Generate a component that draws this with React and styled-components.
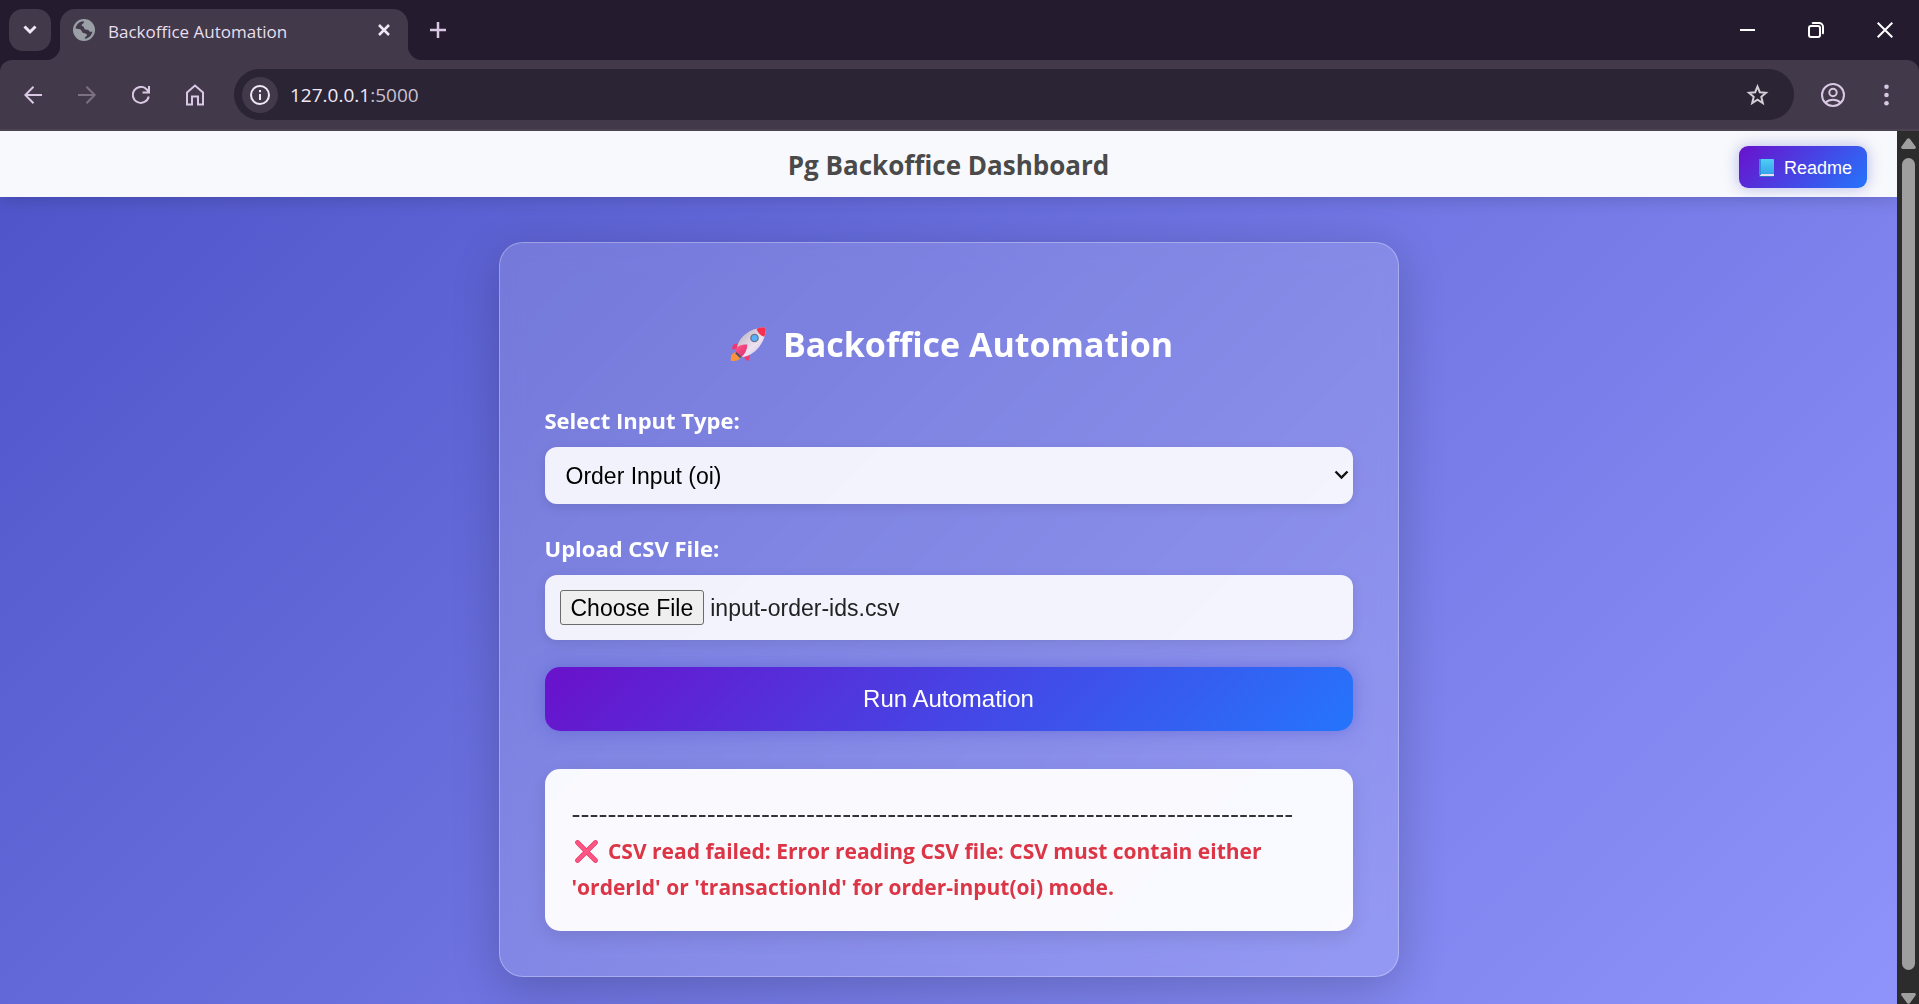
import React, { useEffect, useRef } from "react";
import styled, { createGlobalStyle } from "styled-components";

const ui = `"Segoe UI", "Open Sans", sans-serif`;
const arial = `"Liberation Sans", Arial, sans-serif`;

const GlobalStyle = createGlobalStyle`
  *, *::before, *::after { box-sizing: border-box; }
  body { margin: 0; font-family: ${ui}; background: #241c2e; }
  button { border: 0; padding: 0; cursor: pointer; font-family: ${arial}; }
  svg { display: block; flex: none; }
`;

const Shell = styled.div`
  display: flex;
  flex-direction: column;
  height: 100vh;
`;

/* ---------- browser frame ---------- */

const TabStrip = styled.div`
  display: flex;
  align-items: flex-start;
  height: 60px;
  flex: none;
  padding: 9px 0 0 9px;
  background: #241c2e;
`;

const TabSearch = styled.button`
  display: grid;
  place-items: center;
  width: 42px;
  height: 42px;
  border-radius: 14px;
  background: #42394b;
`;

const Tab = styled.div`
  position: relative;
  display: flex;
  align-items: center;
  width: 348px;
  height: 51px;
  margin-left: 9px;
  padding: 0 13px 9px;
  border-radius: 15px 15px 0 0;
  background: #42394b;

  &::before,
  &::after {
    content: "";
    position: absolute;
    bottom: 0;
    width: 15px;
    height: 15px;
  }
  &::before {
    right: 100%;
    background: radial-gradient(circle at 0 0, transparent 15px, #42394b 16px);
  }
  &::after {
    left: 100%;
    background: radial-gradient(circle at 100% 0, transparent 15px, #42394b 16px);
  }
`;

const TabTitle = styled.span`
  flex: 1;
  margin-left: 13px;
  padding-top: 3px;
  font-size: 17px;
  line-height: 24px;
  color: #e8dfee;
`;

const PlainButton = styled.button`
  display: grid;
  place-items: center;
  width: ${(p) => p.$w}px;
  height: ${(p) => p.$h}px;
  background: transparent;
`;

const NewTab = styled(PlainButton)`
  margin-left: 9px;
`;

const WindowControls = styled.div`
  display: flex;
  margin-left: auto;
`;

const Toolbar = styled.div`
  display: flex;
  align-items: center;
  height: 71px;
  flex: none;
  padding: 0 5px 0 6px;
  border-radius: 12px 12px 0 0;
  border-bottom: 2px solid #4b4352;
  background: #42394b;
`;

const AddressBar = styled.div`
  display: flex;
  align-items: center;
  flex: 1;
  height: 51px;
  margin: 0 12px;
  padding: 0 9px 0 8px;
  border-radius: 26px;
  background: #2b2435;
`;

const SiteInfo = styled.button`
  display: grid;
  place-items: center;
  width: 36px;
  height: 36px;
  border-radius: 50%;
  background: #42394b;
`;

const Url = styled.a`
  flex: 1;
  margin-left: 12px;
  font-size: 19px;
  line-height: 28px;
  color: #f1eaf5;
  text-decoration: none;

  span { color: #c9c0cf; }
`;

const Viewport = styled.div`
  display: grid;
  grid-template-columns: minmax(0, 1fr) 22px;
  flex: 1;
  min-height: 0;
`;

const ScrollRail = styled.div`
  display: flex;
  flex-direction: column;
  align-items: center;
  gap: 9px;
  padding: 7px 0 0;
  background: #2c2c2c;
  overflow: hidden;
`;

const ScrollThumb = styled.div`
  flex: 1;
  width: 13px;
  border-radius: 7px;
  background: #9f9f9f;
`;

const RailEnd = styled.div`
  padding-top: 14px;
`;

/* ---------- page ---------- */

const Page = styled.div`
  overflow-y: auto;
  scrollbar-width: none;
`;

const PageBody = styled.div`
  min-height: 100%;
  background: linear-gradient(135deg, #4e54c8, #8f94fb);
`;

const Header = styled.header`
  display: grid;
  grid-template-columns: 1fr auto 1fr;
  align-items: start;
  padding: 15px 30px 9px;
  background: #f8f9fc;
  box-shadow: 0 3px 15px rgba(0, 0, 0, 0.15);
`;

const HeaderTitle = styled.h1`
  grid-column: 2;
  margin: 0;
  font-size: 26px;
  font-weight: 700;
  line-height: 38px;
  color: #4a4a4a;
`;

const ReadmeButton = styled.button`
  display: flex;
  align-items: center;
  justify-self: end;
  gap: 10px;
  height: 42px;
  padding: 1px 15px 0 20px;
  border-radius: 9px;
  background: linear-gradient(135deg, #6a11cb, #2575fc);
  box-shadow: 0 0 15px rgba(78, 84, 200, 0.4);
  color: #fff;
  font-size: 18px;
  line-height: 24px;
`;

const Main = styled.main`
  display: flex;
  justify-content: center;
  padding: 45px;
`;

const Card = styled.form`
  width: 100%;
  max-width: 900px;
  padding: 77px 45px 45px;
  border: 1px solid rgba(255, 255, 255, 0.3);
  border-radius: 24px;
  background: rgba(255, 255, 255, 0.15);
  backdrop-filter: blur(12px);
  box-shadow: 0 12px 48px rgba(0, 0, 0, 0.2);
`;

const CardTitle = styled.h2`
  display: flex;
  align-items: center;
  justify-content: center;
  gap: 16px;
  margin: 0 0 37px;
  padding-left: 5px;
  font-size: 34px;
  font-weight: 700;
  line-height: 48px;
  color: #fff;
`;

const Label = styled.label`
  display: block;
  margin-bottom: 12px;
  font-size: 22px;
  font-weight: 700;
  line-height: 30px;
  color: #fff;
`;

const field = `
  display: block;
  width: 100%;
  border: 0;
  border-radius: 12px;
  background-color: rgba(255, 255, 255, 0.9);
  box-shadow: 0 3px 12px rgba(0, 0, 0, 0.1);
  font-family: ${arial};
  font-size: 23px;
`;

const SelectWrap = styled.div`
  position: relative;
  margin-bottom: 29px;

  svg {
    position: absolute;
    top: 22px;
    right: 4px;
    pointer-events: none;
  }
`;

const Select = styled.select`
  ${field}
  height: 57px;
  padding: 0 40px 0 21px;
  appearance: none;
  color: #000;
`;

const FileInput = styled.input`
  ${field}
  height: 65px;
  margin-bottom: 27px;
  padding: 15px;
  line-height: 35px;
  color: #222;

  &::file-selector-button {
    height: 35px;
    margin: 0 6px 0 0;
    padding: 0 10px;
    border: 1px solid #6b6b6b;
    border-radius: 3px;
    background: #efefef;
    color: #000;
    font-family: ${arial};
    font-size: 23px;
    line-height: 32px;
  }
`;

const RunButton = styled.button`
  width: 100%;
  height: 64px;
  margin-bottom: 38px;
  border-radius: 15px;
  background: linear-gradient(135deg, #6a11cb, #2575fc);
  box-shadow: 0 0 18px rgba(78, 84, 200, 0.5);
  color: #fff;
  font-size: 24px;
`;

const Result = styled.output`
  display: block;
  padding: 28px 27px 26px;
  border-radius: 15px;
  background: rgba(255, 255, 255, 0.95);
  box-shadow: 0 6px 18px rgba(0, 0, 0, 0.1);
  font-size: 21px;
  line-height: 36px;
`;

const Divider = styled.div`
  font-family: "DejaVu Sans", sans-serif;
  font-size: 25px;
  color: #333;
  white-space: nowrap;
  overflow: hidden;
`;

const ErrorText = styled.strong`
  display: block;
  font-weight: 700;
  color: #dc3545;

  svg {
    display: inline-block;
    margin: 0 5px 0 3px;
    vertical-align: -4px;
  }
`;

/* ---------- drawings ---------- */

const Line = ({ w, h = w, color = "#d9c8e3", sw = 2, children, ...rest }) => (
  <svg width={w} height={h} viewBox={`0 0 ${w} ${h}`} fill="none" stroke={color} strokeWidth={sw} aria-hidden="true" {...rest}>
    {children}
  </svg>
);

const Globe = () => (
  <svg width="22" height="22" viewBox="0 0 22 22" aria-hidden="true">
    <circle cx="11" cy="11" r="11" fill="#9aa0a6" />
    <path d="M2.500 9.500C3 6 6 2.800 10 2.300c2 .5.5 2-.5 2.700-1.500 1-.8 2.200.5 2.500 1.800.5.5 2 2 2.800 1.800 1 3.500 0 4 1.500.3 1.200 2 1.200 3.500.7-.8 4-3.800 6.800-7.500 7.200-.5-1.200.3-2 1.300-2.500 1.200-.6.7-2.200-.8-2.700-1.800-.6-3-.2-3.500-1.700-.5-1.700-1.500-2.800-3.200-2.800-1.300 0-2.300-.6-3.300-.5z" fill="#42394b" />
  </svg>
);

const Book = () => (
  <svg width="15" height="18" viewBox="0 0 15 18" aria-hidden="true">
    <defs>
      <linearGradient id="cover" x1="0" y1="0" x2="0" y2="1">
        <stop offset="0" stopColor="#50cdf5" />
        <stop offset="1" stopColor="#36a5ea" />
      </linearGradient>
    </defs>
    <rect width="15" height="18" rx="1" fill="#2b78c9" />
    <rect x="1" y="15" width="14" height="2" fill="#e4def4" />
    <rect x="1" width="14" height="15" rx="1" fill="url(#cover)" />
    <rect width="2" height="16" fill="#2f92d6" />
  </svg>
);

const Rocket = () => (
  <svg width="38" height="36" viewBox="0 0 38 36" aria-hidden="true">
    <defs>
      <linearGradient id="hull" x1="0" y1="0" x2="1" y2="1">
        <stop offset="0.2" stopColor="#c4bac8" />
        <stop offset="0.6" stopColor="#ece2f1" />
        <stop offset="1" stopColor="#cdb8dc" />
      </linearGradient>
      <linearGradient id="fin" x1="0" y1="0" x2="1" y2="1">
        <stop offset="0" stopColor="#ff5a8c" />
        <stop offset="1" stopColor="#e02a6e" />
      </linearGradient>
    </defs>
    <path d="M8 26c-4.500 0-7 3.500-6 9 5 .6 9.500-1 10-5z" fill="#fb923c" />
    <path d="M12 17L5 18.200c-1.500 1.500-2 3.500-2 5.300l7-1.500zM21 25.500l-1 8.500c-1.200.8-2 .8-2.800.1L13.500 29z" fill="#f0376e" />
    <path d="M8 25C7 15 17 3 34 1.200c2.200-.2 3 .6 2.800 2.800C35.500 19 24 30 13.500 31z" fill="url(#hull)" />
    <path d="M27.500 2.700C29.500 1.900 31.700 1.400 34 1.200c2.200-.2 3 .6 2.800 2.800-.2 2.400-.7 4.600-1.500 6.700-3.700-1-6.300-3.700-7.800-8z" fill="#f8304f" />
    <circle cx="25.500" cy="12" r="4.300" fill="#6e7387" />
    <circle cx="25.500" cy="12" r="3" fill="#57b1fb" />
    <path d="M6 24.500c2-4.500 6.500-6.500 12.500-6-.5 5.500-2.500 9.500-6 12.500z" fill="url(#fin)" />
    <path d="M7.500 26l5 4.700-1.500 1.300-4.800-4.500z" fill="#4c4a6a" />
  </svg>
);

const Cross = () => (
  <svg width="23" height="23" viewBox="0 0 23 23" fill="none" strokeLinecap="round" role="img" aria-label="Error">
    <path d="M2.500 2.500l18 18M20.500 2.500l-18 18" stroke="#e3365f" strokeWidth="4.600" />
    <path d="M2.500 2.500l18 18M20.500 2.500l-18 18" stroke="#ff5585" strokeWidth="3.200" />
  </svg>
);

function CsvUpload() {
  const ref = useRef(null);
  useEffect(() => {
    const transfer = new DataTransfer();
    transfer.items.add(new File(["id\n"], "input-order-ids.csv", { type: "text/csv" }));
    ref.current.files = transfer.files;
  }, []);
  return <FileInput ref={ref} id="csv-file" type="file" accept=".csv" />;
}

export default function App() {
  return (
    <Shell>
      <GlobalStyle />
      <TabStrip>
        <TabSearch aria-label="Search tabs">
          <Line w={14} h={10} color="#f1e8f5" sw={3}><path d="M1.500 1.500L7 7l5.500-5.500" /></Line>
        </TabSearch>
        <Tab>
          <Globe />
          <TabTitle>Backoffice Automation</TabTitle>
          <PlainButton $w={22} $h={22} aria-label="Close tab">
            <Line w={12} color="#f1e8f5" sw={2.5}><path d="M1 1l10 10M11 1L1 11" /></Line>
          </PlainButton>
        </Tab>
        <NewTab $w={42} $h={42} aria-label="New tab">
          <Line w={16} sw={2.5}><path d="M8 0v16M0 8h16" /></Line>
        </NewTab>
        <WindowControls>
          <PlainButton $w={69} $h={41} aria-label="Minimize">
            <Line w={16} color="#fff"><path d="M1 8h15" /></Line>
          </PlainButton>
          <PlainButton $w={69} $h={41} aria-label="Restore">
            <Line w={16} color="#fff"><rect x="1" y="4" width="11" height="11" rx="2" /><path d="M4 1.500c.5-.4 1-.5 1.500-.5H11a4 4 0 0 1 4 4v5.500c0 .6-.2 1.100-.5 1.500" /></Line>
          </PlainButton>
          <PlainButton $w={69} $h={41} aria-label="Close">
            <Line w={16} color="#fff"><path d="M.7.7l14.600 14.600M15.300.7L.7 15.300" /></Line>
          </PlainButton>
        </WindowControls>
      </TabStrip>

      <Toolbar>
        <PlainButton $w={54} $h={48} aria-label="Back">
          <Line w={18}><path d="M18 9H1.500M9.500.8L1.300 9l8.200 8.200" /></Line>
        </PlainButton>
        <PlainButton $w={54} $h={48} aria-label="Forward">
          <Line w={18} color="#7b7183"><path d="M0 9h16.500M8.500.8L16.700 9l-8.200 8.200" /></Line>
        </PlainButton>
        <PlainButton $w={54} $h={48} aria-label="Reload">
          <Line w={18}><path d="M16.700 10.500A8 8 0 1 1 14.800 3.500L17 6M17 0v6.500h-6.500" /></Line>
        </PlainButton>
        <PlainButton $w={54} $h={48} aria-label="Home">
          <Line w={18} h={22}><path d="M1 8.500l8-7 8 7v12h-5v-8H6v8H1z" /></Line>
        </PlainButton>
        <AddressBar>
          <SiteInfo aria-label="Site information">
            <Line w={20} color="#f1eaf5"><circle cx="10" cy="10" r="9" /><path d="M10 9v6M10 5v2.200" /></Line>
          </SiteInfo>
          <Url href="#">127.0.0.1<span>:5000</span></Url>
          <PlainButton $w={54} $h={48} aria-label="Bookmark this page">
            <Line w={24} h={22} color="#d5cdd6" strokeMiterlimit="10">
              <path d="M11.500 2.500l2.300 5.700 6.200.5-4.700 4.100 1.500 6.200-5.300-3.300-5.300 3.300 1.500-6.200L3 8.700l6.200-.5z" />
            </Line>
          </PlainButton>
        </AddressBar>
        <PlainButton $w={54} $h={48} aria-label="Profile">
          <Line w={24}><circle cx="12" cy="12" r="11" /><circle cx="12" cy="9.500" r="3.700" /><path d="M4.500 19.500c4-3.800 11-3.800 15 0" /></Line>
        </PlainButton>
        <PlainButton $w={54} $h={48} aria-label="Menu">
          <svg width="6" height="22" viewBox="0 0 6 22" fill="#d9c8e3" aria-hidden="true">
            <circle cx="2.500" cy="2.700" r="2.300" /><circle cx="2.500" cy="11" r="2.300" /><circle cx="2.500" cy="19.300" r="2.300" />
          </svg>
        </PlainButton>
      </Toolbar>

      <Viewport>
        <Page>
          <PageBody>
            <Header>
              <HeaderTitle>Pg Backoffice Dashboard</HeaderTitle>
              <ReadmeButton><Book />Readme</ReadmeButton>
            </Header>
            <Main>
              <Card onSubmit={(e) => e.preventDefault()}>
                <CardTitle><Rocket />Backoffice Automation</CardTitle>
                <Label htmlFor="input-type">Select Input Type:</Label>
                <SelectWrap>
                  <Select id="input-type" defaultValue="oi">
                    <option value="oi">Order Input (oi)</option>
                  </Select>
                  <Line w={15} h={12} color="#111" sw={2.4}><path d="M1.500 2.500l6 6 6-6" /></Line>
                </SelectWrap>
                <Label htmlFor="csv-file">Upload CSV File:</Label>
                <CsvUpload />
                <RunButton type="submit">Run Automation</RunButton>
                <Result>
                  <Divider>{"-".repeat(80)}</Divider>
                  <ErrorText>
                    <Cross /> CSV read failed: Error reading CSV file: CSV must contain either 'orderId' or 'transactionId' for order-input(oi) mode.
                  </ErrorText>
                </Result>
              </Card>
            </Main>
          </PageBody>
        </Page>
        <ScrollRail aria-hidden="true">
          <svg width="15" height="11" viewBox="0 0 15 11"><path d="M6 1a2 2 0 0 1 3 0l5.500 7.500c.8 1.200.2 2.500-1.200 2.500H1.700C.3 11-.3 9.700.5 8.500z" fill="#9f9f9f" /></svg>
          <ScrollThumb />
          <RailEnd>
            <svg width="15" height="11" viewBox="0 0 15 11"><path d="M6 10a2 2 0 0 0 3 0l5.500-7.500C15.300 1.300 14.700 0 13.300 0H1.700C.3 0-.3 1.300.5 2.500z" fill="#9f9f9f" /></svg>
          </RailEnd>
        </ScrollRail>
      </Viewport>
    </Shell>
  );
}
